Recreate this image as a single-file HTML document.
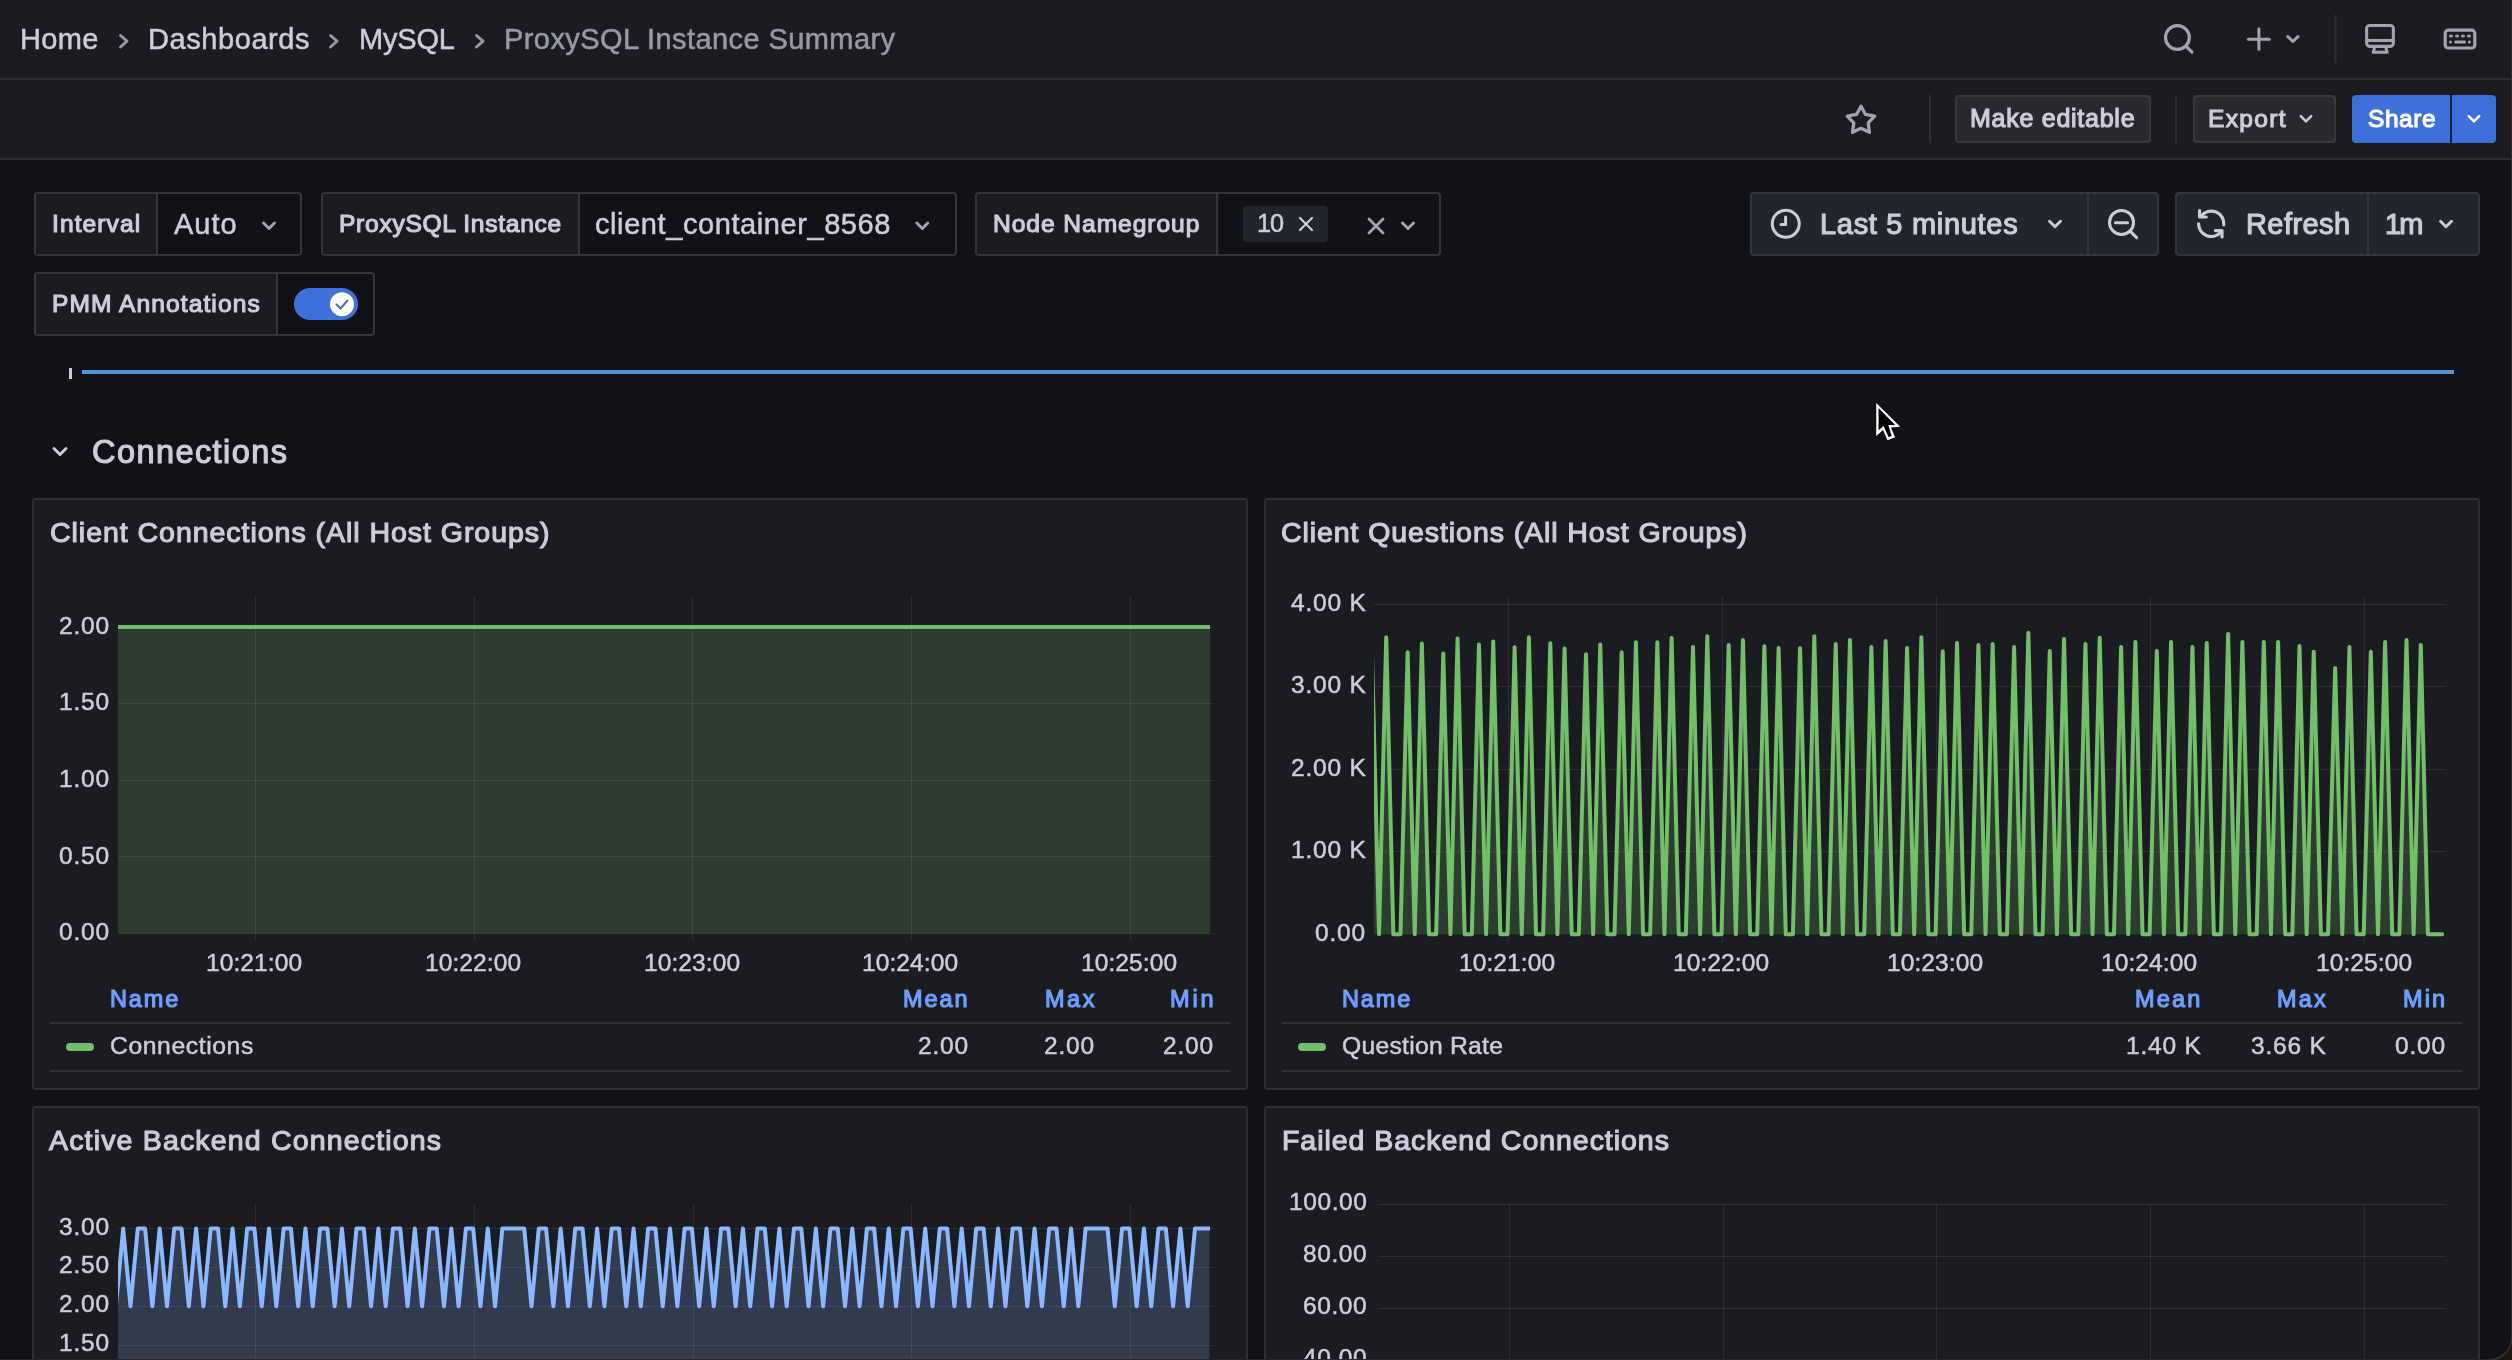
<!DOCTYPE html>
<html><head><meta charset="utf-8"><title>ProxySQL Instance Summary</title>
<style>
html,body{margin:0;padding:0;}
body{width:2512px;height:1360px;overflow:hidden;position:relative;background:#111217;font-family:"Liberation Sans",sans-serif;}
.t{position:absolute;white-space:pre;line-height:1;will-change:transform;}
.b{position:absolute;}
svg{position:absolute;left:0;top:0;overflow:visible;}
</style></head><body>
<div class="b" style="left:0px;top:0px;width:2512px;height:78px;box-sizing:border-box;background:#1b1c21;"></div>
<div class="b" style="left:0px;top:78px;width:2512px;height:2px;box-sizing:border-box;background:#2f3036;"></div>
<div class="b" style="left:0px;top:80px;width:2512px;height:78px;box-sizing:border-box;background:#1b1c21;"></div>
<div class="b" style="left:0px;top:158px;width:2512px;height:2px;box-sizing:border-box;background:#2f3036;"></div>
<div class="t" style="left:19.80px;top:24.60px;font-size:29px;color:#ccccdc;letter-spacing:0.357px;-webkit-text-stroke:0.5px #ccccdc;">Home</div>
<div class="t" style="left:147.80px;top:24.60px;font-size:29px;color:#ccccdc;letter-spacing:0.577px;-webkit-text-stroke:0.5px #ccccdc;">Dashboards</div>
<div class="t" style="left:358.80px;top:24.60px;font-size:29px;color:#ccccdc;letter-spacing:-0.204px;-webkit-text-stroke:0.5px #ccccdc;">MySQL</div>
<div class="t" style="left:504.10px;top:24.60px;font-size:29px;color:#9899a5;letter-spacing:0.424px;-webkit-text-stroke:0.5px #9899a5;">ProxySQL Instance Summary</div>
<div class="b" style="left:1955px;top:95px;width:196px;height:48px;box-sizing:border-box;background:#28292f;border:2px solid #38393f;border-radius:4px;"></div>
<div class="t" style="left:1970.40px;top:106.10px;font-size:25.0px;color:#ccccdc;letter-spacing:0.740px;-webkit-text-stroke:1.15px #ccccdc;">Make editable</div>
<div class="b" style="left:2193px;top:95px;width:143px;height:48px;box-sizing:border-box;background:#28292f;border:2px solid #38393f;border-radius:4px;"></div>
<div class="t" style="left:2208.30px;top:106.75px;font-size:24.5px;color:#ccccdc;letter-spacing:1.339px;-webkit-text-stroke:1.15px #ccccdc;">Export</div>
<div class="b" style="left:2352px;top:95px;width:144px;height:48px;box-sizing:border-box;background:#3d71d9;border-radius:4px;"></div>
<div class="b" style="left:2450px;top:95px;width:2px;height:48px;box-sizing:border-box;background:#0b1a3a;"></div>
<div class="t" style="left:2367.80px;top:106.75px;font-size:24.5px;color:#ffffff;letter-spacing:0.571px;-webkit-text-stroke:1.15px #ffffff;">Share</div>
<div class="b" style="left:34px;top:192px;width:268px;height:64px;box-sizing:border-box;background:#111217;border:2px solid #34363c;border-radius:4px;"></div>
<div class="b" style="left:36px;top:194px;width:121px;height:60px;box-sizing:border-box;background:#1b1c21;border-radius:3px 0 0 3px;"></div>
<div class="b" style="left:156px;top:192px;width:2px;height:64px;box-sizing:border-box;background:#34363c;"></div>
<div class="t" style="left:51.50px;top:211.70px;font-size:24.6px;color:#ccccdc;letter-spacing:1.073px;-webkit-text-stroke:1.15px #ccccdc;">Interval</div>
<div class="t" style="left:174.00px;top:209.80px;font-size:29px;color:#ccccdc;letter-spacing:0.968px;-webkit-text-stroke:0.5px #ccccdc;">Auto</div>
<div class="b" style="left:321px;top:192px;width:636px;height:64px;box-sizing:border-box;background:#111217;border:2px solid #34363c;border-radius:4px;"></div>
<div class="b" style="left:323px;top:194px;width:256px;height:60px;box-sizing:border-box;background:#1b1c21;border-radius:3px 0 0 3px;"></div>
<div class="b" style="left:578px;top:192px;width:2px;height:64px;box-sizing:border-box;background:#34363c;"></div>
<div class="t" style="left:338.80px;top:211.50px;font-size:24.6px;color:#ccccdc;letter-spacing:0.702px;-webkit-text-stroke:1.15px #ccccdc;">ProxySQL Instance</div>
<div class="t" style="left:594.80px;top:209.80px;font-size:29px;color:#ccccdc;letter-spacing:0.582px;-webkit-text-stroke:0.5px #ccccdc;">client_container_8568</div>
<div class="b" style="left:975px;top:192px;width:466px;height:64px;box-sizing:border-box;background:#111217;border:2px solid #34363c;border-radius:4px;"></div>
<div class="b" style="left:977px;top:194px;width:240px;height:60px;box-sizing:border-box;background:#1b1c21;border-radius:3px 0 0 3px;"></div>
<div class="b" style="left:1216px;top:192px;width:2px;height:64px;box-sizing:border-box;background:#34363c;"></div>
<div class="t" style="left:993.10px;top:211.50px;font-size:24.6px;color:#ccccdc;letter-spacing:0.937px;-webkit-text-stroke:1.15px #ccccdc;">Node Namegroup</div>
<div class="b" style="left:1243px;top:206px;width:85px;height:36px;box-sizing:border-box;background:#22252b;border-radius:4px;"></div>
<div class="t" style="left:1257.30px;top:210.75px;font-size:25.3px;color:#ccccdc;letter-spacing:-1.000px;-webkit-text-stroke:0.5px #ccccdc;">10</div>
<div class="b" style="left:1750px;top:192px;width:409px;height:64px;box-sizing:border-box;background:#22252b;border:2px solid #34363c;border-radius:4px;"></div>
<div class="b" style="left:2087px;top:192px;width:2px;height:64px;box-sizing:border-box;background:#34363c;"></div>
<div class="t" style="left:1820.00px;top:210.00px;font-size:29.0px;color:#ccccdc;letter-spacing:0.697px;-webkit-text-stroke:1.15px #ccccdc;">Last 5 minutes</div>
<div class="b" style="left:2175px;top:192px;width:305px;height:64px;box-sizing:border-box;background:#22252b;border:2px solid #34363c;border-radius:4px;"></div>
<div class="b" style="left:2367px;top:192px;width:2px;height:64px;box-sizing:border-box;background:#34363c;"></div>
<div class="t" style="left:2245.50px;top:210.00px;font-size:29.0px;color:#ccccdc;letter-spacing:0.417px;-webkit-text-stroke:1.15px #ccccdc;">Refresh</div>
<div class="t" style="left:2384.50px;top:210.00px;font-size:29.0px;color:#ccccdc;letter-spacing:-2.000px;-webkit-text-stroke:1.15px #ccccdc;">1m</div>
<div class="b" style="left:34px;top:272px;width:341px;height:64px;box-sizing:border-box;background:#111217;border:2px solid #34363c;border-radius:4px;"></div>
<div class="b" style="left:36px;top:274px;width:241px;height:60px;box-sizing:border-box;background:#1b1c21;border-radius:3px 0 0 3px;"></div>
<div class="b" style="left:276px;top:272px;width:2px;height:64px;box-sizing:border-box;background:#34363c;"></div>
<div class="t" style="left:51.80px;top:291.50px;font-size:24.6px;color:#ccccdc;letter-spacing:1.067px;-webkit-text-stroke:1.15px #ccccdc;">PMM Annotations</div>
<div class="b" style="left:294px;top:288px;width:64px;height:32px;box-sizing:border-box;background:#3d71d9;border-radius:16px;"></div>
<div class="b" style="left:69px;top:368px;width:3px;height:11px;box-sizing:border-box;background:#ccccdc;"></div>
<div class="b" style="left:82px;top:370px;width:2372px;height:4px;box-sizing:border-box;background:#4f96d1;"></div>
<div class="t" style="left:92.10px;top:436.25px;font-size:32.5px;color:#ccccdc;letter-spacing:1.430px;-webkit-text-stroke:1.15px #ccccdc;">Connections</div>
<div class="b" style="left:32px;top:498px;width:1216px;height:592px;box-sizing:border-box;background:#1b1c21;border:2px solid #2f3036;border-radius:4px;"></div>
<div class="b" style="left:1264px;top:498px;width:1216px;height:592px;box-sizing:border-box;background:#1b1c21;border:2px solid #2f3036;border-radius:4px;"></div>
<div class="b" style="left:32px;top:1106px;width:1216px;height:294px;box-sizing:border-box;background:#1b1c21;border:2px solid #2f3036;border-radius:4px;"></div>
<div class="b" style="left:1264px;top:1106px;width:1216px;height:294px;box-sizing:border-box;background:#1b1c21;border:2px solid #2f3036;border-radius:4px;"></div>
<div class="t" style="left:49.70px;top:518.05px;font-size:28.5px;color:#ccccdc;letter-spacing:0.966px;-webkit-text-stroke:1.15px #ccccdc;">Client Connections (All Host Groups)</div>
<div class="t" style="left:1280.80px;top:518.05px;font-size:28.5px;color:#ccccdc;letter-spacing:0.921px;-webkit-text-stroke:1.15px #ccccdc;">Client Questions (All Host Groups)</div>
<div class="t" style="left:49.40px;top:1126.05px;font-size:28.5px;color:#ccccdc;letter-spacing:1.172px;-webkit-text-stroke:1.15px #ccccdc;">Active Backend Connections</div>
<div class="t" style="left:1281.80px;top:1126.05px;font-size:28.5px;color:#ccccdc;letter-spacing:0.964px;-webkit-text-stroke:1.15px #ccccdc;">Failed Backend Connections</div>
<div class="t" style="left:59.05px;top:920.25px;font-size:24.5px;color:#ccccdc;letter-spacing:0.800px;-webkit-text-stroke:0.5px #ccccdc;">0.00</div>
<div class="t" style="left:59.05px;top:843.65px;font-size:24.5px;color:#ccccdc;letter-spacing:0.800px;-webkit-text-stroke:0.5px #ccccdc;">0.50</div>
<div class="t" style="left:59.05px;top:767.05px;font-size:24.5px;color:#ccccdc;letter-spacing:0.800px;-webkit-text-stroke:0.5px #ccccdc;">1.00</div>
<div class="t" style="left:59.05px;top:690.45px;font-size:24.5px;color:#ccccdc;letter-spacing:0.800px;-webkit-text-stroke:0.5px #ccccdc;">1.50</div>
<div class="t" style="left:59.05px;top:613.85px;font-size:24.5px;color:#ccccdc;letter-spacing:0.800px;-webkit-text-stroke:0.5px #ccccdc;">2.00</div>
<div class="t" style="left:206.24px;top:950.55px;font-size:24.5px;color:#ccccdc;letter-spacing:0.100px;-webkit-text-stroke:0.5px #ccccdc;">10:21:00</div>
<div class="t" style="left:424.94px;top:950.55px;font-size:24.5px;color:#ccccdc;letter-spacing:0.100px;-webkit-text-stroke:0.5px #ccccdc;">10:22:00</div>
<div class="t" style="left:643.64px;top:950.55px;font-size:24.5px;color:#ccccdc;letter-spacing:0.100px;-webkit-text-stroke:0.5px #ccccdc;">10:23:00</div>
<div class="t" style="left:862.34px;top:950.55px;font-size:24.5px;color:#ccccdc;letter-spacing:0.100px;-webkit-text-stroke:0.5px #ccccdc;">10:24:00</div>
<div class="t" style="left:1081.04px;top:950.55px;font-size:24.5px;color:#ccccdc;letter-spacing:0.100px;-webkit-text-stroke:0.5px #ccccdc;">10:25:00</div>
<div class="t" style="left:109.80px;top:988.45px;font-size:23.5px;color:#6e9fff;letter-spacing:1.852px;-webkit-text-stroke:1.15px #6e9fff;">Name</div>
<div class="t" style="left:903.20px;top:988.45px;font-size:23.5px;color:#6e9fff;letter-spacing:1.950px;-webkit-text-stroke:1.15px #6e9fff;">Mean</div>
<div class="t" style="left:1044.60px;top:988.45px;font-size:23.5px;color:#6e9fff;letter-spacing:2.543px;-webkit-text-stroke:1.15px #6e9fff;">Max</div>
<div class="t" style="left:1169.60px;top:988.45px;font-size:23.5px;color:#6e9fff;letter-spacing:2.832px;-webkit-text-stroke:1.15px #6e9fff;">Min</div>
<div class="b" style="left:50px;top:1022px;width:1180px;height:2px;box-sizing:border-box;background:rgba(204,204,220,0.12);"></div>
<div class="b" style="left:66px;top:1043px;width:28px;height:8px;box-sizing:border-box;background:#73bf69;border-radius:4px;"></div>
<div class="t" style="left:109.80px;top:1034.15px;font-size:24.7px;color:#ccccdc;letter-spacing:0.600px;-webkit-text-stroke:0.5px #ccccdc;">Connections</div>
<div class="t" style="left:918.05px;top:1034.25px;font-size:24.5px;color:#ccccdc;letter-spacing:0.800px;-webkit-text-stroke:0.5px #ccccdc;">2.00</div>
<div class="t" style="left:1044.35px;top:1034.25px;font-size:24.5px;color:#ccccdc;letter-spacing:0.800px;-webkit-text-stroke:0.5px #ccccdc;">2.00</div>
<div class="t" style="left:1163.35px;top:1034.25px;font-size:24.5px;color:#ccccdc;letter-spacing:0.800px;-webkit-text-stroke:0.5px #ccccdc;">2.00</div>
<div class="b" style="left:50px;top:1070px;width:1180px;height:2px;box-sizing:border-box;background:rgba(204,204,220,0.12);"></div>
<div class="t" style="left:1315.35px;top:920.75px;font-size:24.5px;color:#ccccdc;letter-spacing:0.800px;-webkit-text-stroke:0.5px #ccccdc;">0.00</div>
<div class="t" style="left:1290.59px;top:838.30px;font-size:24.5px;color:#ccccdc;letter-spacing:0.800px;-webkit-text-stroke:0.5px #ccccdc;">1.00 K</div>
<div class="t" style="left:1290.59px;top:755.85px;font-size:24.5px;color:#ccccdc;letter-spacing:0.800px;-webkit-text-stroke:0.5px #ccccdc;">2.00 K</div>
<div class="t" style="left:1290.59px;top:673.40px;font-size:24.5px;color:#ccccdc;letter-spacing:0.800px;-webkit-text-stroke:0.5px #ccccdc;">3.00 K</div>
<div class="t" style="left:1290.59px;top:590.95px;font-size:24.5px;color:#ccccdc;letter-spacing:0.800px;-webkit-text-stroke:0.5px #ccccdc;">4.00 K</div>
<div class="t" style="left:1459.24px;top:950.55px;font-size:24.5px;color:#ccccdc;letter-spacing:0.100px;-webkit-text-stroke:0.5px #ccccdc;">10:21:00</div>
<div class="t" style="left:1673.31px;top:950.55px;font-size:24.5px;color:#ccccdc;letter-spacing:0.100px;-webkit-text-stroke:0.5px #ccccdc;">10:22:00</div>
<div class="t" style="left:1887.38px;top:950.55px;font-size:24.5px;color:#ccccdc;letter-spacing:0.100px;-webkit-text-stroke:0.5px #ccccdc;">10:23:00</div>
<div class="t" style="left:2101.45px;top:950.55px;font-size:24.5px;color:#ccccdc;letter-spacing:0.100px;-webkit-text-stroke:0.5px #ccccdc;">10:24:00</div>
<div class="t" style="left:2315.52px;top:950.55px;font-size:24.5px;color:#ccccdc;letter-spacing:0.100px;-webkit-text-stroke:0.5px #ccccdc;">10:25:00</div>
<div class="t" style="left:1342.40px;top:988.45px;font-size:23.5px;color:#6e9fff;letter-spacing:1.852px;-webkit-text-stroke:1.15px #6e9fff;">Name</div>
<div class="t" style="left:2135.00px;top:988.45px;font-size:23.5px;color:#6e9fff;letter-spacing:2.183px;-webkit-text-stroke:1.15px #6e9fff;">Mean</div>
<div class="t" style="left:2277.20px;top:988.45px;font-size:23.5px;color:#6e9fff;letter-spacing:2.142px;-webkit-text-stroke:1.15px #6e9fff;">Max</div>
<div class="t" style="left:2402.80px;top:988.45px;font-size:23.5px;color:#6e9fff;letter-spacing:2.082px;-webkit-text-stroke:1.15px #6e9fff;">Min</div>
<div class="b" style="left:1282px;top:1022px;width:1180px;height:2px;box-sizing:border-box;background:rgba(204,204,220,0.12);"></div>
<div class="b" style="left:1298px;top:1043px;width:28px;height:8px;box-sizing:border-box;background:#73bf69;border-radius:4px;"></div>
<div class="t" style="left:1342.40px;top:1034.15px;font-size:24.7px;color:#ccccdc;letter-spacing:0.262px;-webkit-text-stroke:0.5px #ccccdc;">Question Rate</div>
<div class="t" style="left:2125.80px;top:1034.25px;font-size:24.5px;color:#ccccdc;letter-spacing:0.800px;-webkit-text-stroke:0.5px #ccccdc;">1.40 K</div>
<div class="t" style="left:2251.39px;top:1034.25px;font-size:24.5px;color:#ccccdc;letter-spacing:0.800px;-webkit-text-stroke:0.5px #ccccdc;">3.66 K</div>
<div class="t" style="left:2395.05px;top:1034.25px;font-size:24.5px;color:#ccccdc;letter-spacing:0.800px;-webkit-text-stroke:0.5px #ccccdc;">0.00</div>
<div class="b" style="left:1282px;top:1070px;width:1180px;height:2px;box-sizing:border-box;background:rgba(204,204,220,0.12);"></div>
<div class="t" style="left:58.95px;top:1214.55px;font-size:24.5px;color:#ccccdc;letter-spacing:0.800px;-webkit-text-stroke:0.5px #ccccdc;">3.00</div>
<div class="t" style="left:58.95px;top:1253.45px;font-size:24.5px;color:#ccccdc;letter-spacing:0.800px;-webkit-text-stroke:0.5px #ccccdc;">2.50</div>
<div class="t" style="left:58.95px;top:1292.35px;font-size:24.5px;color:#ccccdc;letter-spacing:0.800px;-webkit-text-stroke:0.5px #ccccdc;">2.00</div>
<div class="t" style="left:58.95px;top:1331.25px;font-size:24.5px;color:#ccccdc;letter-spacing:0.800px;-webkit-text-stroke:0.5px #ccccdc;">1.50</div>
<div class="t" style="left:58.95px;top:1370.15px;font-size:24.5px;color:#ccccdc;letter-spacing:0.800px;-webkit-text-stroke:0.5px #ccccdc;">1.00</div>
<div class="t" style="left:1288.73px;top:1190.05px;font-size:24.5px;color:#ccccdc;letter-spacing:0.600px;-webkit-text-stroke:0.5px #ccccdc;">100.00</div>
<div class="t" style="left:1302.93px;top:1241.95px;font-size:24.5px;color:#ccccdc;letter-spacing:0.600px;-webkit-text-stroke:0.5px #ccccdc;">80.00</div>
<div class="t" style="left:1302.93px;top:1293.85px;font-size:24.5px;color:#ccccdc;letter-spacing:0.600px;-webkit-text-stroke:0.5px #ccccdc;">60.00</div>
<div class="t" style="left:1302.93px;top:1345.75px;font-size:24.5px;color:#ccccdc;letter-spacing:0.600px;-webkit-text-stroke:0.5px #ccccdc;">40.00</div>
<svg width="2512" height="1360" viewBox="0 0 2512 1360">
<rect x="118" y="627.1" width="1092" height="306.4" fill="#73bf69" fill-opacity="0.2"/>
<line x1="118" y1="933.5" x2="1214" y2="933.5" stroke="rgba(204,204,220,0.10)" stroke-width="1"/>
<line x1="118" y1="856.5" x2="1214" y2="856.5" stroke="rgba(204,204,220,0.10)" stroke-width="1"/>
<line x1="118" y1="780.5" x2="1214" y2="780.5" stroke="rgba(204,204,220,0.10)" stroke-width="1"/>
<line x1="118" y1="703.5" x2="1214" y2="703.5" stroke="rgba(204,204,220,0.10)" stroke-width="1"/>
<line x1="118" y1="627.5" x2="1214" y2="627.5" stroke="rgba(204,204,220,0.10)" stroke-width="1"/>
<line x1="255.5" y1="596" x2="255.5" y2="941" stroke="rgba(204,204,220,0.10)" stroke-width="1"/>
<line x1="474.5" y1="596" x2="474.5" y2="941" stroke="rgba(204,204,220,0.10)" stroke-width="1"/>
<line x1="692.5" y1="596" x2="692.5" y2="941" stroke="rgba(204,204,220,0.10)" stroke-width="1"/>
<line x1="911.5" y1="596" x2="911.5" y2="941" stroke="rgba(204,204,220,0.10)" stroke-width="1"/>
<line x1="1130.5" y1="596" x2="1130.5" y2="941" stroke="rgba(204,204,220,0.10)" stroke-width="1"/>
<line x1="118" y1="627.1" x2="1210" y2="627.1" stroke="#73bf69" stroke-width="4"/>
<line x1="1374" y1="851.5" x2="2446" y2="851.5" stroke="rgba(204,204,220,0.10)" stroke-width="1"/>
<line x1="1374" y1="769.5" x2="2446" y2="769.5" stroke="rgba(204,204,220,0.10)" stroke-width="1"/>
<line x1="1374" y1="686.5" x2="2446" y2="686.5" stroke="rgba(204,204,220,0.10)" stroke-width="1"/>
<line x1="1374" y1="604.5" x2="2446" y2="604.5" stroke="rgba(204,204,220,0.10)" stroke-width="1"/>
<line x1="1508.5" y1="596" x2="1508.5" y2="942" stroke="rgba(204,204,220,0.10)" stroke-width="1"/>
<line x1="1722.5" y1="596" x2="1722.5" y2="942" stroke="rgba(204,204,220,0.10)" stroke-width="1"/>
<line x1="1936.5" y1="596" x2="1936.5" y2="942" stroke="rgba(204,204,220,0.10)" stroke-width="1"/>
<line x1="2150.5" y1="596" x2="2150.5" y2="942" stroke="rgba(204,204,220,0.10)" stroke-width="1"/>
<line x1="2364.5" y1="596" x2="2364.5" y2="942" stroke="rgba(204,204,220,0.10)" stroke-width="1"/>
<clipPath id="c2"><rect x="1374" y="590" width="1072" height="370"/></clipPath>
<path d="M1371.93,652.00 L1379.07,934.20 L1386.20,637.30 L1393.34,934.20 L1400.47,934.20 L1407.61,652.30 L1414.74,934.20 L1421.88,643.40 L1429.01,934.20 L1436.14,934.20 L1443.28,653.40 L1450.41,934.20 L1457.55,638.40 L1464.68,934.20 L1471.82,934.20 L1478.95,644.50 L1486.09,934.20 L1493.23,641.40 L1500.36,934.20 L1507.50,934.20 L1514.63,647.30 L1521.77,934.20 L1528.90,637.30 L1536.04,934.20 L1543.17,934.20 L1550.31,643.20 L1557.44,934.20 L1564.58,648.40 L1571.71,934.20 L1578.85,934.20 L1585.98,654.30 L1593.12,934.20 L1600.25,644.50 L1607.38,934.20 L1614.52,934.20 L1621.65,652.30 L1628.79,934.20 L1635.92,642.30 L1643.06,934.20 L1650.20,934.20 L1657.33,642.30 L1664.47,934.20 L1671.60,638.10 L1678.74,934.20 L1685.87,934.20 L1693.01,647.00 L1700.14,934.20 L1707.28,636.20 L1714.41,934.20 L1721.55,934.20 L1728.68,645.10 L1735.82,934.20 L1742.95,640.10 L1750.09,934.20 L1757.22,934.20 L1764.36,646.20 L1771.49,934.20 L1778.62,648.10 L1785.76,934.20 L1792.89,934.20 L1800.03,648.10 L1807.16,934.20 L1814.30,636.20 L1821.43,934.20 L1828.57,934.20 L1835.70,644.00 L1842.84,934.20 L1849.97,640.10 L1857.11,934.20 L1864.24,934.20 L1871.38,647.00 L1878.52,934.20 L1885.65,641.00 L1892.79,934.20 L1899.92,934.20 L1907.06,648.10 L1914.19,934.20 L1921.33,637.30 L1928.46,934.20 L1935.60,934.20 L1942.73,651.20 L1949.87,934.20 L1957.00,642.90 L1964.13,934.20 L1971.27,934.20 L1978.40,645.10 L1985.54,934.20 L1992.68,644.00 L1999.81,934.20 L2006.95,934.20 L2014.08,647.00 L2021.22,934.20 L2028.35,632.80 L2035.49,934.20 L2042.62,934.20 L2049.76,651.00 L2056.89,934.20 L2064.03,639.00 L2071.16,934.20 L2078.30,934.20 L2085.43,644.00 L2092.57,934.20 L2099.70,637.80 L2106.84,934.20 L2113.97,934.20 L2121.11,647.00 L2128.24,934.20 L2135.38,642.10 L2142.51,934.20 L2149.64,934.20 L2156.78,651.00 L2163.91,934.20 L2171.05,642.10 L2178.18,934.20 L2185.32,934.20 L2192.45,647.00 L2199.59,934.20 L2206.72,642.90 L2213.86,934.20 L2220.99,934.20 L2228.13,633.90 L2235.26,934.20 L2242.40,642.10 L2249.53,934.20 L2256.67,934.20 L2263.81,642.10 L2270.94,934.20 L2278.07,642.10 L2285.21,934.20 L2292.35,934.20 L2299.48,645.90 L2306.61,934.20 L2313.75,651.80 L2320.89,934.20 L2328.02,934.20 L2335.15,667.90 L2342.29,934.20 L2349.43,647.00 L2356.56,934.20 L2363.70,934.20 L2370.83,651.80 L2377.97,934.20 L2385.10,642.10 L2392.24,934.20 L2399.37,934.20 L2406.51,640.10 L2413.64,934.20 L2420.78,645.10 L2427.91,934.20 L2435.05,934.20 L2442.18,934.20 L2442.18,934.2 L1371.93,934.2 Z" fill="#73bf69" fill-opacity="0.2" clip-path="url(#c2)"/>
<path d="M1371.93,652.00 L1379.07,934.20 L1386.20,637.30 L1393.34,934.20 L1400.47,934.20 L1407.61,652.30 L1414.74,934.20 L1421.88,643.40 L1429.01,934.20 L1436.14,934.20 L1443.28,653.40 L1450.41,934.20 L1457.55,638.40 L1464.68,934.20 L1471.82,934.20 L1478.95,644.50 L1486.09,934.20 L1493.23,641.40 L1500.36,934.20 L1507.50,934.20 L1514.63,647.30 L1521.77,934.20 L1528.90,637.30 L1536.04,934.20 L1543.17,934.20 L1550.31,643.20 L1557.44,934.20 L1564.58,648.40 L1571.71,934.20 L1578.85,934.20 L1585.98,654.30 L1593.12,934.20 L1600.25,644.50 L1607.38,934.20 L1614.52,934.20 L1621.65,652.30 L1628.79,934.20 L1635.92,642.30 L1643.06,934.20 L1650.20,934.20 L1657.33,642.30 L1664.47,934.20 L1671.60,638.10 L1678.74,934.20 L1685.87,934.20 L1693.01,647.00 L1700.14,934.20 L1707.28,636.20 L1714.41,934.20 L1721.55,934.20 L1728.68,645.10 L1735.82,934.20 L1742.95,640.10 L1750.09,934.20 L1757.22,934.20 L1764.36,646.20 L1771.49,934.20 L1778.62,648.10 L1785.76,934.20 L1792.89,934.20 L1800.03,648.10 L1807.16,934.20 L1814.30,636.20 L1821.43,934.20 L1828.57,934.20 L1835.70,644.00 L1842.84,934.20 L1849.97,640.10 L1857.11,934.20 L1864.24,934.20 L1871.38,647.00 L1878.52,934.20 L1885.65,641.00 L1892.79,934.20 L1899.92,934.20 L1907.06,648.10 L1914.19,934.20 L1921.33,637.30 L1928.46,934.20 L1935.60,934.20 L1942.73,651.20 L1949.87,934.20 L1957.00,642.90 L1964.13,934.20 L1971.27,934.20 L1978.40,645.10 L1985.54,934.20 L1992.68,644.00 L1999.81,934.20 L2006.95,934.20 L2014.08,647.00 L2021.22,934.20 L2028.35,632.80 L2035.49,934.20 L2042.62,934.20 L2049.76,651.00 L2056.89,934.20 L2064.03,639.00 L2071.16,934.20 L2078.30,934.20 L2085.43,644.00 L2092.57,934.20 L2099.70,637.80 L2106.84,934.20 L2113.97,934.20 L2121.11,647.00 L2128.24,934.20 L2135.38,642.10 L2142.51,934.20 L2149.64,934.20 L2156.78,651.00 L2163.91,934.20 L2171.05,642.10 L2178.18,934.20 L2185.32,934.20 L2192.45,647.00 L2199.59,934.20 L2206.72,642.90 L2213.86,934.20 L2220.99,934.20 L2228.13,633.90 L2235.26,934.20 L2242.40,642.10 L2249.53,934.20 L2256.67,934.20 L2263.81,642.10 L2270.94,934.20 L2278.07,642.10 L2285.21,934.20 L2292.35,934.20 L2299.48,645.90 L2306.61,934.20 L2313.75,651.80 L2320.89,934.20 L2328.02,934.20 L2335.15,667.90 L2342.29,934.20 L2349.43,647.00 L2356.56,934.20 L2363.70,934.20 L2370.83,651.80 L2377.97,934.20 L2385.10,642.10 L2392.24,934.20 L2399.37,934.20 L2406.51,640.10 L2413.64,934.20 L2420.78,645.10 L2427.91,934.20 L2435.05,934.20 L2442.18,934.20" fill="none" stroke="#73bf69" stroke-width="4" stroke-linejoin="round" stroke-linecap="round" clip-path="url(#c2)"/>
<line x1="118" y1="1228.5" x2="1214" y2="1228.5" stroke="rgba(204,204,220,0.10)" stroke-width="1"/>
<line x1="118" y1="1267.5" x2="1214" y2="1267.5" stroke="rgba(204,204,220,0.10)" stroke-width="1"/>
<line x1="118" y1="1306.5" x2="1214" y2="1306.5" stroke="rgba(204,204,220,0.10)" stroke-width="1"/>
<line x1="118" y1="1345.5" x2="1214" y2="1345.5" stroke="rgba(204,204,220,0.10)" stroke-width="1"/>
<line x1="118" y1="1384.5" x2="1214" y2="1384.5" stroke="rgba(204,204,220,0.10)" stroke-width="1"/>
<line x1="255.5" y1="1204" x2="255.5" y2="1400" stroke="rgba(204,204,220,0.10)" stroke-width="1"/>
<line x1="474.5" y1="1204" x2="474.5" y2="1400" stroke="rgba(204,204,220,0.10)" stroke-width="1"/>
<line x1="693.5" y1="1204" x2="693.5" y2="1400" stroke="rgba(204,204,220,0.10)" stroke-width="1"/>
<line x1="911.5" y1="1204" x2="911.5" y2="1400" stroke="rgba(204,204,220,0.10)" stroke-width="1"/>
<line x1="1130.5" y1="1204" x2="1130.5" y2="1400" stroke="rgba(204,204,220,0.10)" stroke-width="1"/>
<clipPath id="c3"><rect x="118" y="1150" width="1092" height="300"/></clipPath>
<path d="M115.91,1306.30 L123.20,1228.50 L130.49,1306.30 L137.78,1228.50 L145.07,1228.50 L152.36,1306.30 L159.66,1228.50 L166.95,1306.30 L174.24,1228.50 L181.53,1228.50 L188.82,1306.30 L196.11,1228.50 L203.40,1306.30 L210.69,1228.50 L217.98,1228.50 L225.27,1306.30 L232.56,1228.50 L239.86,1306.30 L247.15,1228.50 L254.44,1228.50 L261.73,1306.30 L269.02,1228.50 L276.31,1306.30 L283.60,1228.50 L290.89,1228.50 L298.18,1306.30 L305.48,1228.50 L312.77,1306.30 L320.06,1228.50 L327.35,1228.50 L334.64,1306.30 L341.93,1228.50 L349.22,1306.30 L356.51,1228.50 L363.80,1228.50 L371.09,1306.30 L378.38,1228.50 L385.68,1306.30 L392.97,1228.50 L400.26,1228.50 L407.55,1306.30 L414.84,1228.50 L422.13,1306.30 L429.42,1228.50 L436.71,1228.50 L444.00,1306.30 L451.30,1228.50 L458.59,1306.30 L465.88,1228.50 L473.17,1228.50 L480.46,1306.30 L487.75,1228.50 L495.04,1306.30 L502.33,1228.50 L509.62,1228.50 L516.91,1228.50 L524.21,1228.50 L531.50,1306.30 L538.79,1228.50 L546.08,1228.50 L553.37,1306.30 L560.66,1228.50 L567.95,1306.30 L575.24,1228.50 L582.53,1228.50 L589.82,1306.30 L597.12,1228.50 L604.41,1306.30 L611.70,1228.50 L618.99,1228.50 L626.28,1306.30 L633.57,1228.50 L640.86,1306.30 L648.15,1228.50 L655.44,1228.50 L662.73,1306.30 L670.03,1228.50 L677.32,1306.30 L684.61,1228.50 L691.90,1228.50 L699.19,1306.30 L706.48,1228.50 L713.77,1306.30 L721.06,1228.50 L728.35,1228.50 L735.64,1306.30 L742.94,1228.50 L750.23,1306.30 L757.52,1228.50 L764.81,1228.50 L772.10,1306.30 L779.39,1228.50 L786.68,1306.30 L793.97,1228.50 L801.26,1228.50 L808.55,1306.30 L815.85,1228.50 L823.14,1306.30 L830.43,1228.50 L837.72,1228.50 L845.01,1306.30 L852.30,1228.50 L859.59,1306.30 L866.88,1228.50 L874.17,1228.50 L881.46,1306.30 L888.76,1228.50 L896.05,1306.30 L903.34,1228.50 L910.63,1228.50 L917.92,1306.30 L925.21,1228.50 L932.50,1306.30 L939.79,1228.50 L947.08,1228.50 L954.37,1306.30 L961.67,1228.50 L968.96,1306.30 L976.25,1228.50 L983.54,1228.50 L990.83,1306.30 L998.12,1228.50 L1005.41,1306.30 L1012.70,1228.50 L1019.99,1228.50 L1027.28,1306.30 L1034.58,1228.50 L1041.87,1306.30 L1049.16,1228.50 L1056.45,1228.50 L1063.74,1306.30 L1071.03,1228.50 L1078.32,1306.30 L1085.61,1228.50 L1092.90,1228.50 L1100.19,1228.50 L1107.49,1228.50 L1114.78,1306.30 L1122.07,1228.50 L1129.36,1228.50 L1136.65,1306.30 L1143.94,1228.50 L1151.23,1306.30 L1158.52,1228.50 L1165.81,1228.50 L1173.10,1306.30 L1180.40,1228.50 L1187.69,1306.30 L1194.98,1228.50 L1202.27,1228.50 L1209.56,1228.50 L1209.56,1500 L115.91,1500 Z" fill="#8ab8ff" fill-opacity="0.2" clip-path="url(#c3)"/>
<path d="M115.91,1306.30 L123.20,1228.50 L130.49,1306.30 L137.78,1228.50 L145.07,1228.50 L152.36,1306.30 L159.66,1228.50 L166.95,1306.30 L174.24,1228.50 L181.53,1228.50 L188.82,1306.30 L196.11,1228.50 L203.40,1306.30 L210.69,1228.50 L217.98,1228.50 L225.27,1306.30 L232.56,1228.50 L239.86,1306.30 L247.15,1228.50 L254.44,1228.50 L261.73,1306.30 L269.02,1228.50 L276.31,1306.30 L283.60,1228.50 L290.89,1228.50 L298.18,1306.30 L305.48,1228.50 L312.77,1306.30 L320.06,1228.50 L327.35,1228.50 L334.64,1306.30 L341.93,1228.50 L349.22,1306.30 L356.51,1228.50 L363.80,1228.50 L371.09,1306.30 L378.38,1228.50 L385.68,1306.30 L392.97,1228.50 L400.26,1228.50 L407.55,1306.30 L414.84,1228.50 L422.13,1306.30 L429.42,1228.50 L436.71,1228.50 L444.00,1306.30 L451.30,1228.50 L458.59,1306.30 L465.88,1228.50 L473.17,1228.50 L480.46,1306.30 L487.75,1228.50 L495.04,1306.30 L502.33,1228.50 L509.62,1228.50 L516.91,1228.50 L524.21,1228.50 L531.50,1306.30 L538.79,1228.50 L546.08,1228.50 L553.37,1306.30 L560.66,1228.50 L567.95,1306.30 L575.24,1228.50 L582.53,1228.50 L589.82,1306.30 L597.12,1228.50 L604.41,1306.30 L611.70,1228.50 L618.99,1228.50 L626.28,1306.30 L633.57,1228.50 L640.86,1306.30 L648.15,1228.50 L655.44,1228.50 L662.73,1306.30 L670.03,1228.50 L677.32,1306.30 L684.61,1228.50 L691.90,1228.50 L699.19,1306.30 L706.48,1228.50 L713.77,1306.30 L721.06,1228.50 L728.35,1228.50 L735.64,1306.30 L742.94,1228.50 L750.23,1306.30 L757.52,1228.50 L764.81,1228.50 L772.10,1306.30 L779.39,1228.50 L786.68,1306.30 L793.97,1228.50 L801.26,1228.50 L808.55,1306.30 L815.85,1228.50 L823.14,1306.30 L830.43,1228.50 L837.72,1228.50 L845.01,1306.30 L852.30,1228.50 L859.59,1306.30 L866.88,1228.50 L874.17,1228.50 L881.46,1306.30 L888.76,1228.50 L896.05,1306.30 L903.34,1228.50 L910.63,1228.50 L917.92,1306.30 L925.21,1228.50 L932.50,1306.30 L939.79,1228.50 L947.08,1228.50 L954.37,1306.30 L961.67,1228.50 L968.96,1306.30 L976.25,1228.50 L983.54,1228.50 L990.83,1306.30 L998.12,1228.50 L1005.41,1306.30 L1012.70,1228.50 L1019.99,1228.50 L1027.28,1306.30 L1034.58,1228.50 L1041.87,1306.30 L1049.16,1228.50 L1056.45,1228.50 L1063.74,1306.30 L1071.03,1228.50 L1078.32,1306.30 L1085.61,1228.50 L1092.90,1228.50 L1100.19,1228.50 L1107.49,1228.50 L1114.78,1306.30 L1122.07,1228.50 L1129.36,1228.50 L1136.65,1306.30 L1143.94,1228.50 L1151.23,1306.30 L1158.52,1228.50 L1165.81,1228.50 L1173.10,1306.30 L1180.40,1228.50 L1187.69,1306.30 L1194.98,1228.50 L1202.27,1228.50 L1209.56,1228.50" fill="none" stroke="#8ab8ff" stroke-width="4" stroke-linejoin="round" stroke-linecap="round" clip-path="url(#c3)"/>
<line x1="1378" y1="1204.5" x2="2446" y2="1204.5" stroke="rgba(204,204,220,0.10)" stroke-width="1"/>
<line x1="1378" y1="1256.5" x2="2446" y2="1256.5" stroke="rgba(204,204,220,0.10)" stroke-width="1"/>
<line x1="1378" y1="1308.5" x2="2446" y2="1308.5" stroke="rgba(204,204,220,0.10)" stroke-width="1"/>
<line x1="1378" y1="1360.5" x2="2446" y2="1360.5" stroke="rgba(204,204,220,0.10)" stroke-width="1"/>
<line x1="1509.5" y1="1204" x2="1509.5" y2="1400" stroke="rgba(204,204,220,0.10)" stroke-width="1"/>
<line x1="1723.5" y1="1204" x2="1723.5" y2="1400" stroke="rgba(204,204,220,0.10)" stroke-width="1"/>
<line x1="1936.5" y1="1204" x2="1936.5" y2="1400" stroke="rgba(204,204,220,0.10)" stroke-width="1"/>
<line x1="2150.5" y1="1204" x2="2150.5" y2="1400" stroke="rgba(204,204,220,0.10)" stroke-width="1"/>
<line x1="2364.5" y1="1204" x2="2364.5" y2="1400" stroke="rgba(204,204,220,0.10)" stroke-width="1"/>
</svg>
<div class="b" style="left:2511px;top:0px;width:1px;height:1360px;box-sizing:border-box;background:#2d2e34;"></div>
<div class="b" style="left:0px;top:1359px;width:2512px;height:1px;box-sizing:border-box;background:#25262b;"></div>
<svg width="2512" height="1360" viewBox="0 0 2512 1360">
<polyline points="120.5,35.5 127,41.2 120.5,47" fill="none" stroke="#9899a5" stroke-width="2.9" stroke-linecap="round" stroke-linejoin="round"/>
<polyline points="330.5,35.5 337,41.2 330.5,47" fill="none" stroke="#9899a5" stroke-width="2.9" stroke-linecap="round" stroke-linejoin="round"/>
<polyline points="476.5,35.5 483,41.2 476.5,47" fill="none" stroke="#9899a5" stroke-width="2.9" stroke-linecap="round" stroke-linejoin="round"/>
<circle cx="2177.4" cy="37.45" r="11.9" fill="none" stroke="#a2a3ad" stroke-width="3.2"/>
<line x1="2186.3" y1="46.6" x2="2192" y2="52.2" stroke="#a2a3ad" stroke-width="3.2" stroke-linecap="round"/>
<line x1="2248.4" y1="39.2" x2="2269.3" y2="39.2" stroke="#a2a3ad" stroke-width="3" stroke-linecap="round"/>
<line x1="2258.9" y1="28.7" x2="2258.9" y2="49.3" stroke="#a2a3ad" stroke-width="3" stroke-linecap="round"/>
<polyline points="2287.8,36.6 2292.9,41.5 2298,36.6" fill="none" stroke="#a2a3ad" stroke-width="3" stroke-linecap="round" stroke-linejoin="round"/>
<line x1="2335.5" y1="15" x2="2335.5" y2="63" stroke="#2f3036" stroke-width="2"/>
<rect x="2366.65" y="25.45" width="26.7" height="20.9" rx="3" fill="none" stroke="#a2a3ad" stroke-width="3.1"/>
<line x1="2366.65" y1="40.5" x2="2393.35" y2="40.5" stroke="#a2a3ad" stroke-width="3.1"/>
<path d="M2374.6,47.6 L2373.2,52.2 L2387.2,52.2 L2385.8,47.6" fill="none" stroke="#a2a3ad" stroke-width="3" stroke-linejoin="round"/>
<rect x="2445.2" y="30.2" width="29.6" height="17.8" rx="3" fill="none" stroke="#a2a3ad" stroke-width="3.2"/>
<ellipse cx="2451" cy="36" rx="2.1" ry="1.5" fill="#a2a3ad"/>
<ellipse cx="2457" cy="36" rx="2.1" ry="1.5" fill="#a2a3ad"/>
<ellipse cx="2462.9" cy="36" rx="2.1" ry="1.5" fill="#a2a3ad"/>
<ellipse cx="2468.9" cy="36" rx="2.1" ry="1.5" fill="#a2a3ad"/>
<circle cx="2450.4" cy="41.9" r="1.5" fill="#a2a3ad"/>
<line x1="2455.6" y1="41.9" x2="2464.6" y2="41.9" stroke="#a2a3ad" stroke-width="3" stroke-linecap="round"/>
<circle cx="2469.4" cy="41.9" r="1.5" fill="#a2a3ad"/>
<polygon points="1861.00,106.20 1865.47,114.45 1874.70,116.15 1868.23,122.95 1869.46,132.25 1861.00,128.20 1852.54,132.25 1853.77,122.95 1847.30,116.15 1856.53,114.45" fill="none" stroke="#a2a3ad" stroke-width="3.3" stroke-linejoin="round"/>
<line x1="1930" y1="95" x2="1930" y2="143" stroke="#2f3036" stroke-width="2"/>
<line x1="2176" y1="95" x2="2176" y2="143" stroke="#2f3036" stroke-width="2"/>
<polyline points="2300.8,116.2 2306,121.4 2311.2,116.2" fill="none" stroke="#ccccdc" stroke-width="2.5" stroke-linecap="round" stroke-linejoin="round"/>
<polyline points="2468.8,116.2 2474,121.4 2479.2,116.2" fill="none" stroke="#ffffff" stroke-width="2.5" stroke-linecap="round" stroke-linejoin="round"/>
<polyline points="263.5,223 269,228.5 274.5,223" fill="none" stroke="#a2a3ad" stroke-width="2.9" stroke-linecap="round" stroke-linejoin="round"/>
<polyline points="916.8,223 922.3,228.5 927.8,223" fill="none" stroke="#a2a3ad" stroke-width="2.9" stroke-linecap="round" stroke-linejoin="round"/>
<path d="M1300,218 L1312,230 M1312,218 L1300,230" stroke="#ccccdc" stroke-width="2.2" stroke-linecap="round"/>
<path d="M1369,219 L1383,233 M1383,219 L1369,233" stroke="#a2a3ad" stroke-width="2.8" stroke-linecap="round"/>
<polyline points="1402.5,223 1408,228.5 1413.5,223" fill="none" stroke="#a2a3ad" stroke-width="2.9" stroke-linecap="round" stroke-linejoin="round"/>
<circle cx="1785.75" cy="223.8" r="13.5" fill="none" stroke="#ccccdc" stroke-width="3"/>
<polyline points="1785.6,217 1785.6,224.6 1781,224.6" fill="none" stroke="#ccccdc" stroke-width="3" stroke-linecap="round" stroke-linejoin="round"/>
<polyline points="2049.5,221.3 2055,226.8 2060.5,221.3" fill="none" stroke="#ccccdc" stroke-width="2.9" stroke-linecap="round" stroke-linejoin="round"/>
<circle cx="2121.5" cy="222.4" r="12" fill="none" stroke="#ccccdc" stroke-width="3"/>
<line x1="2115.5" y1="222.8" x2="2127.5" y2="222.8" stroke="#ccccdc" stroke-width="3" stroke-linecap="round"/>
<line x1="2130.6" y1="231.6" x2="2136.6" y2="237.6" stroke="#ccccdc" stroke-width="3" stroke-linecap="round"/>
<path d="M2201.5,215.7 A12.6,12.6 0 0 1 2223.8,224.9" fill="none" stroke="#ccccdc" stroke-width="3.2" stroke-linecap="round"/>
<path d="M2198.6,223.8 A12.6,12.6 0 0 0 2220.9,231.9" fill="none" stroke="#ccccdc" stroke-width="3.2" stroke-linecap="round"/>
<polyline points="2199.6,210.6 2199.6,217 2206.2,217" fill="none" stroke="#ccccdc" stroke-width="3.2" stroke-linecap="round" stroke-linejoin="round"/>
<polyline points="2215.4,230.6 2222,230.6 2222,237" fill="none" stroke="#ccccdc" stroke-width="3.2" stroke-linecap="round" stroke-linejoin="round"/>
<polyline points="2440.5,221.3 2446,226.8 2451.5,221.3" fill="none" stroke="#ccccdc" stroke-width="2.9" stroke-linecap="round" stroke-linejoin="round"/>
<circle cx="342" cy="304.2" r="12" fill="#ffffff"/>
<polyline points="336.5,304.5 340.5,308.5 347.5,300.5" fill="none" stroke="#3d71d9" stroke-width="2" stroke-linecap="round" stroke-linejoin="round"/>
<polyline points="54,448.5 60,454.5 66,448.5" fill="none" stroke="#ccccdc" stroke-width="2.9" stroke-linecap="round" stroke-linejoin="round"/>
<path d="M2512,1338 L2512,1360 L2490,1360 A22,22 0 0 0 2512,1338 Z" fill="#1d1510"/>
<path d="M2511.5,1338 A21.5,21.5 0 0 1 2490,1359.5" fill="none" stroke="#3a3b40" stroke-width="1.2"/>
<polygon points="1876.2,402.9 1876.2,435.9 1883,430 1887.5,440.3 1895.1,437.3 1890.9,427.4 1900.2,426.8" fill="#ffffff"/>
<polygon points="1878.6,407.9 1878.6,430.2 1883.6,426 1888.5,437.1 1891.7,435.9 1888.3,425.1 1895.1,424.9" fill="#000000"/>
</svg>
</body></html>
